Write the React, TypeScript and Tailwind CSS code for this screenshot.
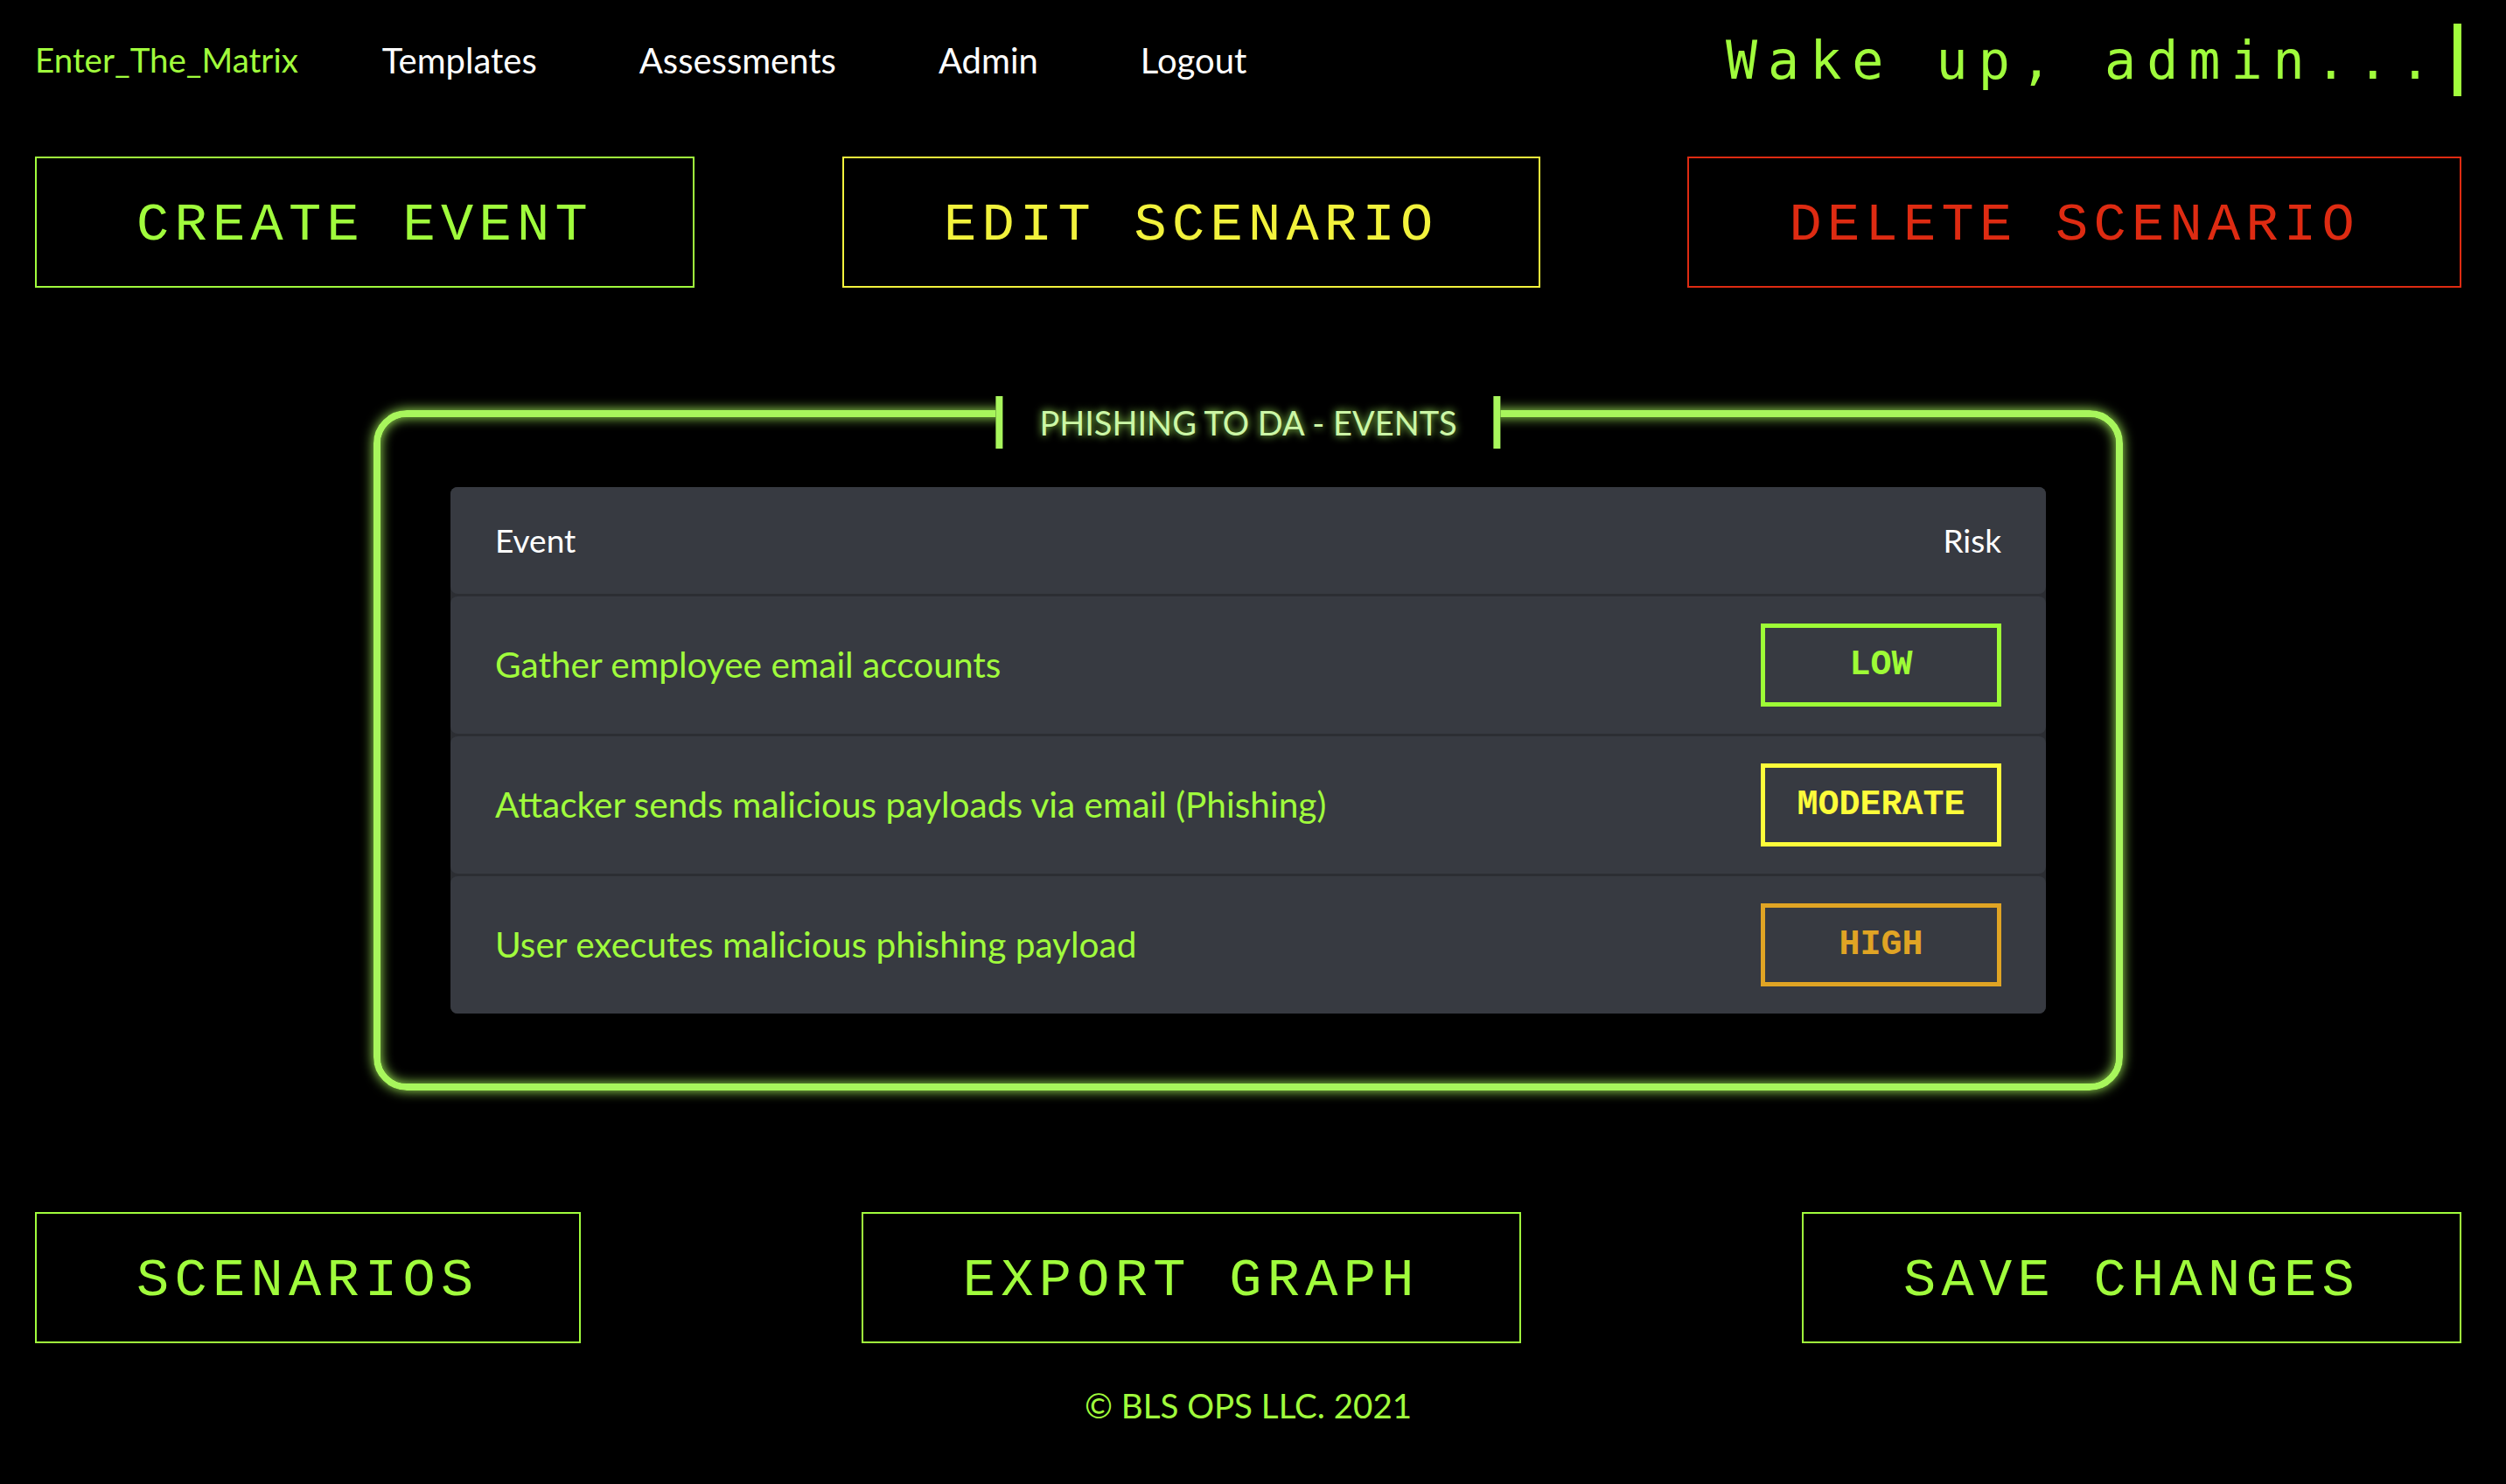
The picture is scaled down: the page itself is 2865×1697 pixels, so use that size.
import React from 'react'

const events = [
  { name: 'Gather employee email accounts', risk: 'LOW' },
  { name: 'Attacker sends malicious payloads via email (Phishing)', risk: 'MODERATE' },
  { name: 'User executes malicious phishing payload', risk: 'HIGH' },
]

function RiskBadge({ risk }: { risk: string }) {
  let color = 'border-[#9efc36] text-[#9efc36]'
  if (risk === 'MODERATE') color = 'border-[#fdfc3a] text-[#fdfc3a]'
  if (risk === 'HIGH') color = 'border-[#e0a424] text-[#e0a424]'
  return (
    <div className={`flex h-[95px] w-[275px] items-center justify-center border-[5px] font-['Courier_New','Liberation_Mono',monospace] text-[40px] font-bold leading-none ${color}`}>
      {risk}
    </div>
  )
}

function BigButton({ label, tone }: { label: string; tone: 'green' | 'yellow' | 'red' }) {
  let color = 'border-[#a0fc3c] text-[#a0fc3c]'
  if (tone === 'yellow') color = 'border-[#f2f23c] text-[#f2f23c]'
  if (tone === 'red') color = 'border-[#de2b12] text-[#de2b12]'
  return (
    <button className={`flex h-[150px] items-center justify-center border-2 px-[114px] pt-[7px] font-['Courier_New','Liberation_Mono',monospace] text-[62px] leading-none tracking-[6.3px] ${color}`}>
      {label}
    </button>
  )
}

export default function App() {
  return (
    <div className="min-h-screen bg-black pl-[40px] pr-[51px] font-['Lato','Open_Sans',sans-serif]">
      <nav className="flex items-center justify-between pt-[27px]">
        <div className="flex items-center leading-none">
          <a href="#" className="text-[38.5px] text-[#a0fc3c]">Enter_The_Matrix</a>
          <ul className="ml-[96px] flex gap-[117px] text-[40px] text-white">
            <li><a href="#">Templates</a></li>
            <li><a href="#">Assessments</a></li>
            <li><a href="#">Admin</a></li>
            <li><a href="#">Logout</a></li>
          </ul>
        </div>
        <div className="flex items-center text-[#a0fc3c]">
          <span className="font-['DejaVu_Sans_Mono',monospace] text-[60px] leading-none tracking-[12px]">Wake up, admin...</span>
          <span className="ml-[14px] h-[83px] w-[9px] bg-[#a0fc3c]" />
        </div>
      </nav>

      <div className="mt-[69px] flex justify-between">
        <BigButton label="CREATE EVENT" tone="green" />
        <BigButton label="EDIT SCENARIO" tone="yellow" />
        <BigButton label="DELETE SCENARIO" tone="red" />
      </div>

      <section className="relative mx-auto mt-[140px] w-[2000px] rounded-[38px] border-[8px] border-[#a8f65c] p-[80px] shadow-[0_0_14px_#a8f65c,inset_0_0_14px_#a8f65c]">
        <div className="absolute left-1/2 top-[-24px] flex h-[60px] -translate-x-1/2 items-center border-x-[8px] border-[#a8f65c] bg-black px-[42px] text-[38px] leading-none text-[#ccf7a6] [text-shadow:0_0_10px_#a8f65c]">
          PHISHING TO DA - EVENTS
        </div>
        <div className="flex flex-col gap-[3px] rounded-[8px] bg-[#2c2e33]">
          <div className="flex h-[122px] items-center justify-between rounded-[8px] bg-[#373a41] pl-[51px] pr-[51px] text-[37px] text-white">
            <span>Event</span>
            <span>Risk</span>
          </div>
          {events.map((e) => (
            <div key={e.name} className="flex h-[157px] items-center justify-between rounded-[8px] bg-[#373a41] pl-[51px] pr-[51px]">
              <span className="text-[40.6px] text-[#a0fc3c]">{e.name}</span>
              <RiskBadge risk={e.risk} />
            </div>
          ))}
        </div>
      </section>

      <div className="mt-[139px] flex justify-between">
        <BigButton label="SCENARIOS" tone="green" />
        <BigButton label="EXPORT GRAPH" tone="green" />
        <BigButton label="SAVE CHANGES" tone="green" />
      </div>

      <footer className="mt-[52px] pb-[40px] text-center text-[38.5px] leading-none text-[#a0fc3c]">
        © BLS OPS LLC. 2021
      </footer>
    </div>
  )
}
